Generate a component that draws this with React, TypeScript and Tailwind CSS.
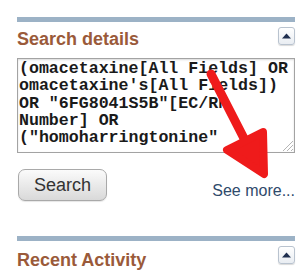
import React from "react";

function CollapseBtn() {
  return (
    <div className="w-[17px] h-[18px] rounded-[3px] border border-[#b9c3cf] bg-gradient-to-b from-white to-[#e9edf2] flex items-center justify-center shadow-[0_1px_1px_rgba(0,0,0,0.15)]">
      <svg width="9" height="6" viewBox="0 0 9 6">
        <polygon points="0,5.5 4.5,0.5 9,5.5" fill="#1f2f4f" />
      </svg>
    </div>
  );
}

export default function App() {
  const lines = [
    "(omacetaxine[All Fields] OR",
    "omacetaxine's[All Fields])",
    'OR "6FG8041S5B"[EC/RN',
    "Number] OR",
    '("homoharringtonine"',
  ];
  return (
    <div className="relative w-[300px] h-[280px] overflow-hidden bg-white pl-[17px] pr-[5px] pt-[17px]" style={{ fontFamily: '"Liberation Sans", Arial, sans-serif' }}>
      <div className="h-[5px] bg-[#9cb2c6]" />
      <div className="flex items-start justify-between mt-[5px]">
        <div className="mt-[1px] text-[18px] leading-[22px] font-bold text-[#9a5a3a]">Search details</div>
        <CollapseBtn />
      </div>
      <div className="relative mt-[8px] h-[95px] border border-[#a3a3a3] overflow-hidden pl-[1px] pt-[1px] shadow-[inset_0_1px_2px_rgba(0,0,0,0.15)]">
        {lines.map((l, i) => (
          <div key={i} className="whitespace-pre text-[16.6px] leading-[17.3px] text-[#1a1a1a] font-bold" style={{ fontFamily: '"Liberation Mono", "Courier New", monospace' }}>
            {l}
          </div>
        ))}
        <svg className="absolute right-0 bottom-0" width="12" height="12" viewBox="0 0 12 12">
          <line x1="11" y1="1" x2="1" y2="11" stroke="#b5b5b5" strokeWidth="1" />
          <line x1="11" y1="5" x2="5" y2="11" stroke="#b5b5b5" strokeWidth="1" />
          <line x1="11" y1="9" x2="9" y2="11" stroke="#b5b5b5" strokeWidth="1" />
        </svg>
      </div>
      <div className="flex items-end justify-between mt-[16px]">
        <div className="ml-[1px] w-[89px] h-[32px] rounded-[7px] border border-[#a9a9a9] bg-gradient-to-b from-[#fbfbfb] to-[#d9d9d9] flex items-center justify-center text-[18px] text-[#333] shadow-[0_1px_1px_rgba(0,0,0,0.1)]">
          Search
        </div>
        <div className="text-[16px] leading-[18px] text-[#2f4a6b] mb-[1px]">See more...</div>
      </div>
      <div className="h-[5px] bg-[#9cb2c6] mt-[35px]" />
      <div className="flex items-start justify-between mt-[5px]">
        <div className="mt-[3px] text-[18px] leading-[22px] font-bold text-[#9a5a3a]">Recent Activity</div>
        <CollapseBtn />
      </div>
      <svg className="absolute left-0 top-0 pointer-events-none" width="300" height="280" viewBox="0 0 300 280">
        <g fill="#ef1b1b" stroke="#ef1b1b" strokeLinecap="round" strokeLinejoin="round">
          <line x1="211" y1="74" x2="252" y2="154" strokeWidth="9" />
          <polygon points="227,150 264,174 263,132" strokeWidth="8" />
        </g>
      </svg>
    </div>
  );
}
